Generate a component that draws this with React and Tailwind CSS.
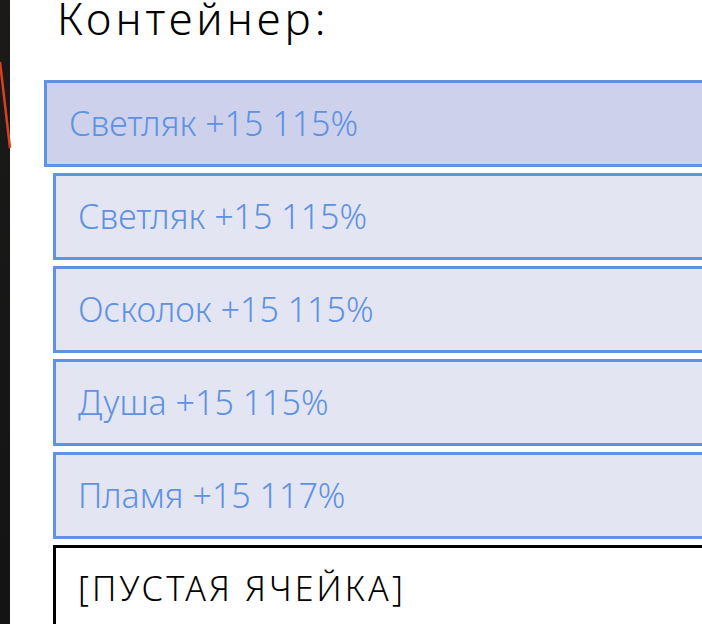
import React from "react";

const items = [
  { label: "Светляк +15 115%", active: true },
  { label: "Светляк +15 115%" },
  { label: "Осколок +15 115%" },
  { label: "Душа +15 115%" },
  { label: "Пламя +15 117%" },
];

const font = { fontFamily: '"Noto Sans", "DejaVu Sans", sans-serif' };

export default function App() {
  return (
    <div className="flex w-[702px] h-[624px] overflow-hidden bg-white" style={font}>
      {/* left dark strip */}
      <div className="relative w-[10px] shrink-0 bg-gradient-to-b from-[#1b1a19] to-[#141414]">
        <svg className="absolute left-0 top-0" width="12" height="160">
          <line x1="0" y1="62" x2="10" y2="148" stroke="#d8401f" strokeWidth="2.5" />
        </svg>
      </div>

      <div className="flex-1 flex flex-col pl-[34px]">
        <div className="h-[80px] shrink-0 pl-[13px]">
          <div className="text-[44px] leading-[36px] tracking-[4px] text-black font-light">
            Контейнер:
          </div>
        </div>

        <div className="flex flex-col gap-[6px] shrink-0">
          {items.map((item, i) => (
            <div
              key={i}
              className={`h-[87px] w-[720px] shrink-0 flex items-center border-[3px] border-[#5f92e0] text-[#5f92e0] text-[34px] font-light pl-[22px] ${
                item.active ? "bg-[#cdd1ec]" : "bg-[#e3e5f3] ml-[9px]"
              }`}
            >
              {item.label}
            </div>
          ))}
          <div className="h-[87px] w-[720px] shrink-0 ml-[9px] flex items-center border-[3px] border-black bg-white text-black text-[34px] tracking-[3.2px] font-light pl-[22px]">
            [ПУСТАЯ ЯЧЕЙКА]
          </div>
        </div>
      </div>
    </div>
  );
}
